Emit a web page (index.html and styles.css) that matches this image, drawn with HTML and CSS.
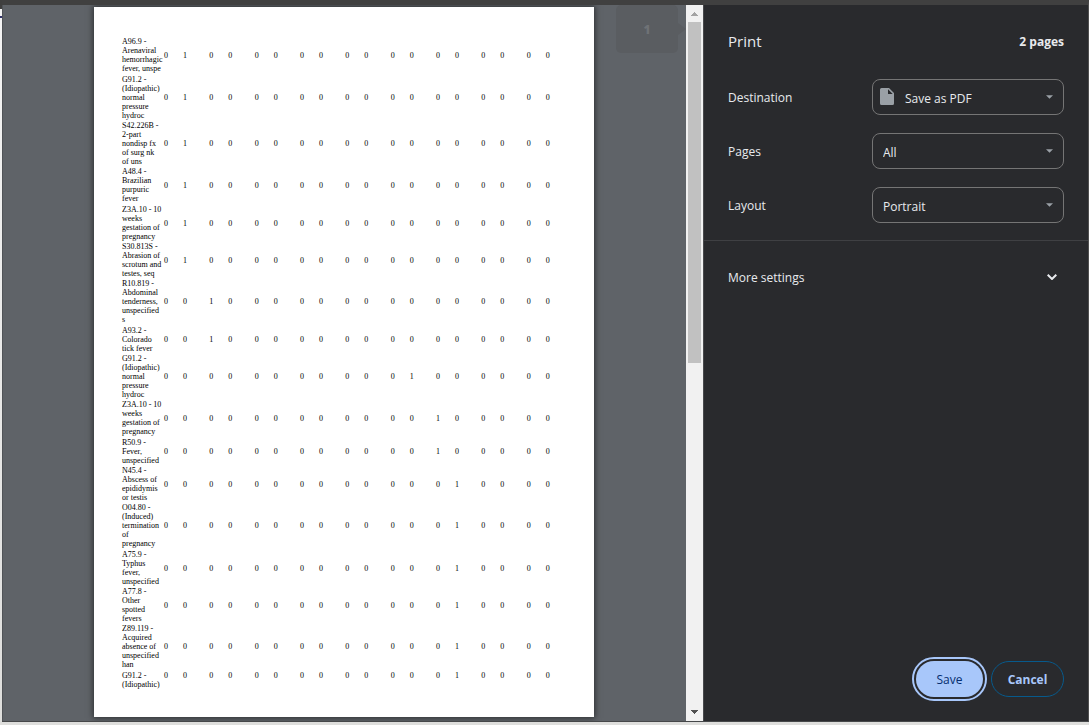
FILE: index.html
```html
<!DOCTYPE html>
<html lang="en">
<head>
<meta charset="utf-8">
<title>Print</title>
<link rel="stylesheet" href="styles.css">
</head>
<body>
<div class="window">
  <main class="preview">
    <article class="page">
      <table class="report">
        <colgroup id="cols"><col class="col-name"></colgroup>
        <tbody id="rows"></tbody>
      </table>
    </article>
    <div class="page-indicator">1</div>
  </main>
  <div class="scrollbar">
    <svg class="arrow up" viewBox="0 0 7 4" shape-rendering="crispEdges"><path d="M3 0h1v1h1v1h1v1h1v1H0V3h1V2h1V1h1z"/></svg>
    <div class="track"><div class="thumb"></div></div>
    <svg class="arrow down" viewBox="0 0 7 4" shape-rendering="crispEdges"><path d="M0 0h7v1H6v1H5v1H4v1H3V3H2V2H1V1H0z"/></svg>
  </div>
  <aside class="sidebar">
    <header class="head"><h1>Print</h1><span class="count">2 pages</span></header>
    <form class="settings">
      <div class="row">
        <label for="dest">Destination</label>
        <div class="field with-icon">
          <svg class="file" viewBox="0 0 14 17"><path fill-rule="evenodd" d="M1.500 0H9l5 5v10.500a1.500 1.500 0 0 1-1.500 1.500h-11A1.500 1.500 0 0 1 0 15.500v-14A1.500 1.500 0 0 1 1.500 0zM8 1.300V6h4.700z"/></svg>
          <select id="dest"><option>Save as PDF</option></select>
          <svg class="caret" viewBox="0 0 8 4"><path d="M0 0h8L4 4z"/></svg>
        </div>
      </div>
      <div class="row">
        <label for="pages">Pages</label>
        <div class="field">
          <select id="pages"><option>All</option></select>
          <svg class="caret" viewBox="0 0 8 4"><path d="M0 0h8L4 4z"/></svg>
        </div>
      </div>
      <div class="row">
        <label for="layout">Layout</label>
        <div class="field">
          <select id="layout"><option>Portrait</option></select>
          <svg class="caret" viewBox="0 0 8 4"><path d="M0 0h8L4 4z"/></svg>
        </div>
      </div>
    </form>
    <button class="more" type="button"><span>More settings</span>
      <svg class="chevron" viewBox="0 0 10 6"><path d="M.7.700 5 5 9.300.7"/></svg>
    </button>
    <footer class="actions">
      <button class="btn save" type="button">Save</button>
      <button class="btn cancel" type="button">Cancel</button>
    </footer>
  </aside>
</div>
<script src="report.js"></script>
</body>
</html>
```
FILE: report.js
```js
// Each entry: diagnosis text and the index of the column that counts 1.
const data = [
  ["A96.9 - Arenaviral hemorrhagic fever, unspe", 1],
  ["G91.2 - (Idiopathic) normal pressure hydroc", 1],
  ["S42.226B - 2-part nondisp fx of surg nk of\u00a0uns", 1],
  ["A48.4 - Brazilian purpuric fever", 1],
  ["Z3A.10 - 10 weeks gestation of pregnancy", 1],
  ["S30.813S - Abrasion of scrotum and testes, seq", 1],
  ["R10.819 - Abdominal tenderness, unspecified s", 2],
  ["A93.2 - Colorado tick fever", 2],
  ["G91.2 - (Idiopathic) normal pressure hydroc", 11],
  ["Z3A.10 - 10 weeks gestation of pregnancy", 12],
  ["R50.9 - Fever, unspecified", 12],
  ["N45.4 - Abscess of epididymis or testis", 13],
  ["O04.80 - (Induced) termination of pregnancy", 13],
  ["A75.9 - Typhus fever, unspecified", 13],
  ["A77.8 - Other spotted fevers", 13],
  ["Z89.119 - Acquired absence of unspecified han", 13],
  ["G91.2 - (Idiopathic)", 13]
];
const cols = document.getElementById("cols");
for (let i = 0; i < 18; i++) {
  const col = document.createElement("col");
  col.className = i % 2 ? "col-wide" : "col-narrow";
  cols.append(col);
}
const body = document.getElementById("rows");
for (const [name, hit] of data) {
  const tr = body.insertRow();
  const th = document.createElement("th");
  th.scope = "row";
  th.textContent = name;
  tr.append(th);
  for (let i = 0; i < 18; i++) tr.insertCell().textContent = i === hit ? "1" : "0";
}
```
FILE: styles.css
```css
* { box-sizing: border-box; }
body {
  margin: 0;
  height: 100vh;
  padding: 0 0 3px 2px;
  display: flex;
  background: linear-gradient(#3f3f3f 9px, #f4f4f4 9px, #f4f4f4 16px, #33336b 16px, #33336b 18px, #f4f4f4 18px, #dededc 100%);
  font-family: "Open Sans", "Noto Sans", sans-serif;
  font-size: 12px;
  color: #e8eaed;
}
.window {
  flex: 1;
  min-width: 0;
  display: flex;
  border-top: 5px solid #404040;
  border-right: 1px solid #505050;
  border-bottom: 1px solid #46484a;
}
.preview {
  position: relative;
  flex: 1;
  min-width: 0;
  display: flex;
  justify-content: center;
  padding: 2px 1px 4px 0;
  background: #5f6368;
  border-left: 1px solid #505357;
  overflow: hidden;
}
.page {
  width: 500px;
  padding: 30px 22px 0 28px;
  background: #fff;
  color: #000;
  box-shadow: 0 0 6px 1px rgba(0, 0, 0, .55);
}
.report {
  width: 100%;
  table-layout: fixed;
  border-collapse: collapse;
  font-family: "Liberation Serif", serif;
  font-size: 8px;
  line-height: 9px;
}
.report th, .report td { padding: 0 0 1px; text-align: left; font-weight: 400; vertical-align: middle; }
.report th { padding-right: 1px; }
.report tr:nth-child(3n+1) > * { padding-bottom: 2px; }
.report tr:last-child > * { vertical-align: top; }
.col-name { width: 42px; }
.col-narrow { width: 19px; }
.page-indicator {
  position: absolute;
  top: 0;
  right: 8px;
  width: 62px;
  height: 48px;
  display: flex;
  align-items: center;
  justify-content: center;
  border-radius: 5px;
  background: #5a5d61;
  color: #6f7276;
  font-family: "Open Sans", sans-serif;
  font-size: 12px;
  font-weight: 800;
}
.page-indicator::after {
  content: "";
  position: absolute;
  left: 100%;
  border: 6px solid transparent;
  border-left: 8px solid #5a5d61;
  border-right: 0;
}
.scrollbar {
  width: 17px;
  display: flex;
  flex-direction: column;
  align-items: center;
  background: #f1f1f1;
}
.arrow { width: 7px; height: 4px; }
.up { margin: 7px 0 6px; fill: #a3a3a3; }
.down { margin: 6px 0 7px; fill: #505050; }
.track { flex: 1; width: 13px; }
.thumb { height: 50%; background: #c1c1c1; }
.sidebar {
  width: 385px;
  display: flex;
  flex-direction: column;
  background: #292a2d;
  border-left: 1px solid #48494c;
}
.head {
  display: flex;
  align-items: center;
  justify-content: space-between;
  height: 74px;
  padding: 0 24px 2px;
}
h1 { margin: 0; font-size: 15px; font-weight: 400; }
.count { font-weight: 700; }
.settings {
  display: flex;
  flex-direction: column;
  gap: 18px;
  padding: 0 24px 17px;
  border-bottom: 1px solid #3f4043;
}
.row { display: flex; align-items: center; justify-content: space-between; }
.field { position: relative; width: 192px; height: 36px; }
select {
  width: 100%;
  height: 100%;
  padding: 2px 28px 0 10px;
  appearance: none;
  border: 1px solid #757575;
  border-radius: 8px;
  background: transparent;
  color: inherit;
  font: inherit;
}
.with-icon select { padding-left: 32px; }
.file { position: absolute; left: 8px; top: 9px; width: 14px; height: 17px; fill: #9aa0a6; }
.caret { position: absolute; right: 11px; top: 16px; width: 7px; height: 4px; fill: #9aa0a6; }
button { font: inherit; cursor: pointer; }
.more {
  display: flex;
  align-items: center;
  justify-content: space-between;
  height: 72px;
  padding: 0 31px 0 24px;
  border: 0;
  background: none;
  color: inherit;
}
.chevron { width: 10px; height: 6px; fill: none; stroke: #e8eaed; stroke-width: 2; }
.actions {
  display: flex;
  justify-content: flex-end;
  gap: 8px;
  margin-top: auto;
  padding: 24px;
}
.btn { height: 36px; padding: 0; border-radius: 18px; }
.save {
  width: 67px;
  border: 0;
  background: #a8c7fa;
  color: #062e6f;
  outline: 2px solid #a8c7fa;
  outline-offset: 2px;
}
.cancel {
  width: 73px;
  border: 1px solid #075a8c;
  background: none;
  color: #a8c7fa;
  font-weight: 700;
}
```
